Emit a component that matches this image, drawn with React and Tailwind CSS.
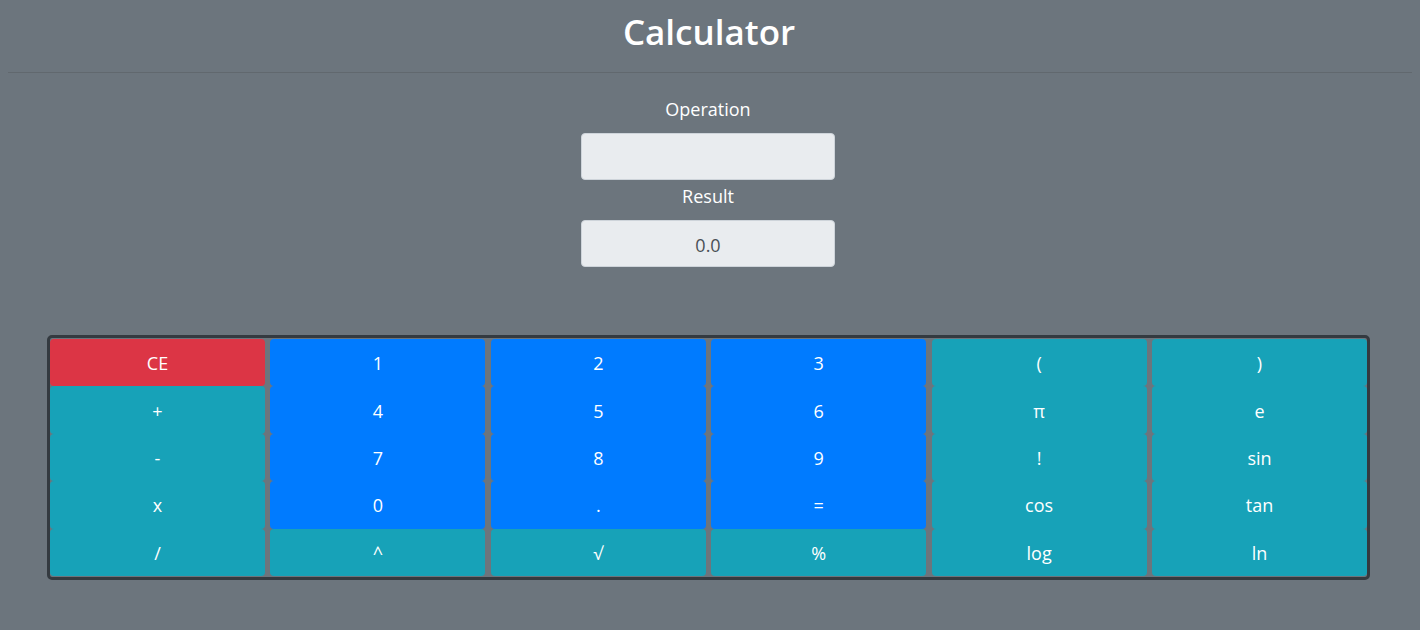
import React from "react";

const rows = [
  [["CE", "r"], ["1", "b"], ["2", "b"], ["3", "b"], ["(", "t"], [")", "t"]],
  [["+", "t"], ["4", "b"], ["5", "b"], ["6", "b"], ["π", "t"], ["e", "t"]],
  [["-", "t"], ["7", "b"], ["8", "b"], ["9", "b"], ["!", "t"], ["sin", "t"]],
  [["x", "t"], ["0", "b"], [".", "b"], ["=", "b"], ["cos", "t"], ["tan", "t"]],
  [["/", "t"], ["^", "t"], ["√", "t"], ["%", "t"], ["log", "t"], ["ln", "t"]],
];

const colorClass = {
  r: "bg-[#dc3545]",
  b: "bg-[#007bff]",
  t: "bg-[#17a2b8]",
};

export default function App() {
  return (
    <div
      className="min-h-[630px] w-[1420px] bg-[#6c757d] text-white"
      style={{ fontFamily: '"Open Sans", "Noto Sans", sans-serif' }}
    >
      <div className="px-2">
        <h1 className="pt-[8px] h-[64px] pr-[2px] text-center text-[35px] font-semibold leading-[48px]">
          Calculator
        </h1>
        <div className="mt-[8px] border-t border-[#61686e]" />
      </div>
      <div className="mt-[24px] flex flex-col items-center pr-[4px]">
        <div className="text-[18px] leading-[24px]">Operation</div>
        <div className="mt-[12px] h-[47px] w-[254px] rounded-[4px] border border-[#ced4da] bg-[#e9ecef]" />
        <div className="mt-[4px] text-[18px] leading-[24px]">Result</div>
        <div className="mt-[12px] flex h-[47px] w-[254px] items-center justify-center rounded-[4px] border border-[#ced4da] bg-[#e9ecef] pt-[3px] text-[18px] text-[#495057]">
          0.0
        </div>
      </div>
      <div className="mt-[68px] ml-[47px] w-[1323px] rounded-[5px] border-[3px] border-[#343a40] bg-[#6c757d] pt-[1px] pb-[1px]">
        <div className="grid grid-cols-6 gap-x-[5.4px]">
          {rows.flat().map(([label, c], i) => (
            <div
              key={i}
              className={`flex h-[47.4px] items-center justify-center rounded-[4px] pt-[2px] text-[18px] ${colorClass[c]}`}
            >
              {label}
            </div>
          ))}
        </div>
      </div>
    </div>
  );
}
